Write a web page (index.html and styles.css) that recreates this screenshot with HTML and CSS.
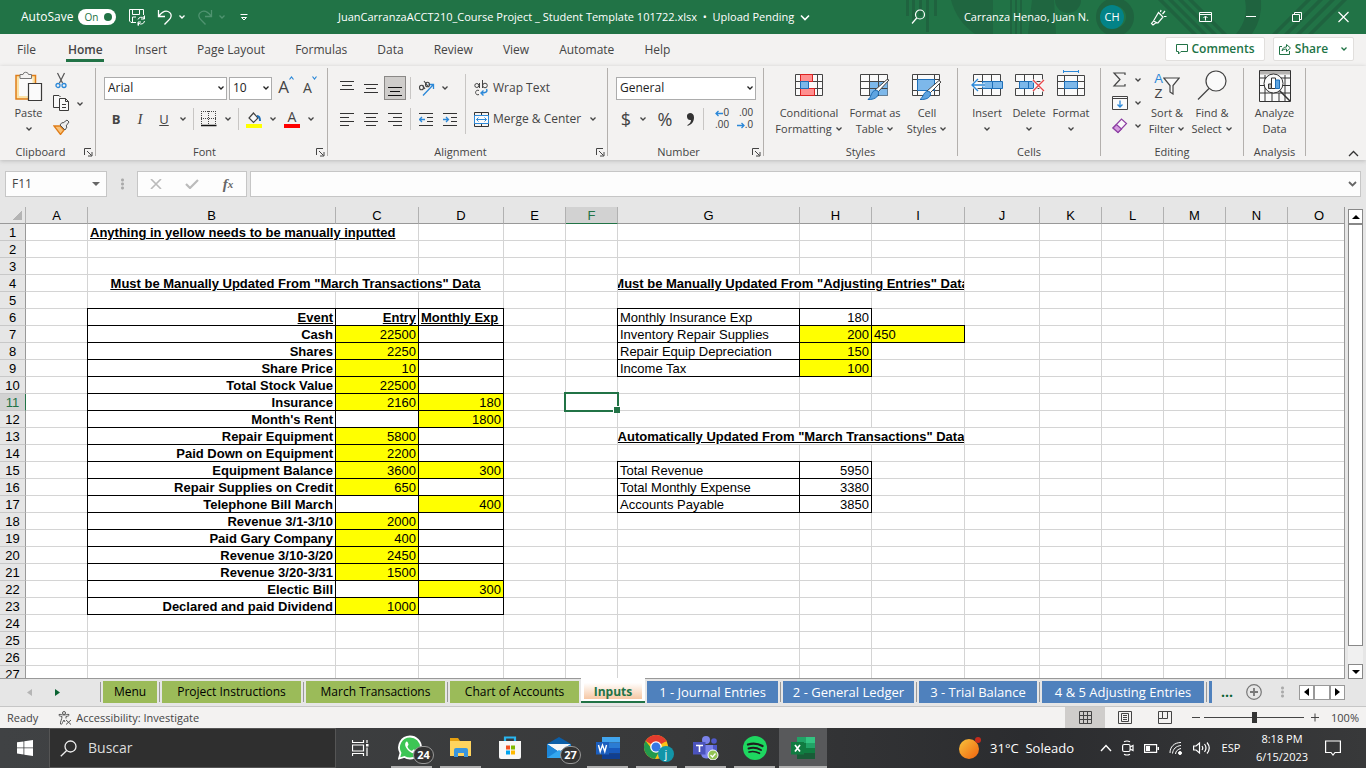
FILE: index.html
```html
<!DOCTYPE html>
<html lang="en">
<head>
<meta charset="utf-8">
<title>JuanCarranzaACCT210_Course Project _ Student Template 101722.xlsx</title>
<link rel="stylesheet" href="styles.css">
</head>
<body>
<svg class="defs" aria-hidden="true">
  <symbol id="chev" viewBox="0 0 8 6"><path d="M1.500 1.500 4 4l2.500-2.500" fill="none" stroke="currentColor" stroke-width="1.300"/></symbol>
  <symbol id="launch" viewBox="0 0 9 9"><path d="M.5 7V.5H7M3 3l4.500 4.500M8 4v4H4" fill="none" stroke="currentColor"/></symbol>
</svg>

<header class="title">
  <svg class="pattern" viewBox="0 0 460 34" preserveAspectRatio="xMaxYMin slice" aria-hidden="true">
    <g fill="#1f633f">
      <path d="M0 0h3v16H0zM6 0h3v20H6zM13 0h3v16h-3zM20 0h3v32h-3zM28 0h3v16h-3z"/>
      <path d="M45 0a60 60 0 0 0 24 34h18V0zM126 0h22l2 34h-28z" opacity=".8"/>
      <path d="M104 0h2v34h-2zM109 0h2v34h-2zM114 0h2v34h-2z"/>
      <path d="M149 0a13 13 0 0 0 26 0z"/>
      <path d="M330 34a40 40 0 0 0 9-34h16a52 52 0 0 1-9 34z"/>
      <path d="m252 0 34 34h5L257 0zm10 0 34 34h5L267 0zm10 0 34 34h5L277 0zm10 0 34 34h5L287 0zM366 34l34-34h5l-34 34zm12 0 34-34h5l-34 34zm12 0 34-34h5l-34 34zm12 0 34-34h5l-34 34z"/>
    </g>
    <circle cx="209" cy="17" r="15" fill="none" stroke="#1f633f" stroke-width="8"/>
  </svg>
  <label class="autosave">AutoSave <span class="switch"><input type="checkbox" checked><span>On</span></span></label>
  <button class="tbtn save" aria-label="Save"><svg width="18" height="18" viewBox="0 0 18 18" fill="none" stroke="#fff"><path d="M8 14.500H3L1.500 13V1.500h14V7M4.500 1.500v5h7v-5M4.500 14v-5H8M10 11.500a3.500 3.500 0 0 1 6-1V8m.5 5a3.500 3.500 0 0 1-6 2V17.500M16.500 7.500V11H13M10 17.500V14h3"/></svg></button>
  <button class="tbtn undo" aria-label="Undo"><svg width="16" height="17" viewBox="0 0 16 17" fill="none" stroke="#fff" stroke-width="1.300"><path d="M1.500 1v6.500H8M2 7c3-4 6-5.500 9-4.500 3 1 4 4 2.500 6.500-1 2-4 4-6 6.500"/></svg><svg class="ch" ><use href="#chev"/></svg></button>
  <button class="tbtn redo" aria-label="Redo"><svg width="16" height="17" viewBox="0 0 16 17" fill="none" stroke="#4f9370" stroke-width="1.300"><path d="M14.500 1v6.500H8M14 7c-3-4-6-5.500-9-4.500-3 1-4 4-2.500 6.500 1 2 4 4 6 6.500"/></svg><svg class="ch"><use href="#chev"/></svg></button>
  <button class="tbtn qat" aria-label="Customize Quick Access Toolbar"><svg width="8" height="7" viewBox="0 0 8 7"><path d="M.5.500h7" stroke="#fff"/><path d="M1.500 3.500 4 6l2.500-2.500z" stroke="#fff" fill="none"/></svg></button>
  <button class="docname">JuanCarranzaACCT210_Course Project _ Student Template 101722.xlsx&nbsp; • &nbsp;Upload Pending <svg width="10" height="7" viewBox="0 0 10 7"><path d="m1 1.500 4 4 4-4" fill="none" stroke="#fff" stroke-width="1.600"/></svg></button>
  <div class="tright">
    <button class="tbtn find" aria-label="Search"><svg width="15" height="16" viewBox="0 0 15 16" fill="none" stroke="#fff" stroke-width="1.200"><circle cx="9" cy="5.500" r="4.500"/><path d="M5.700 9 1 14.500"/></svg></button>
    <button class="user">Carranza Henao, Juan N. <span class="avatar">CH</span></button>
    <button class="tbtn pen" aria-label="Coming soon"><svg width="17" height="17" viewBox="0 0 17 17" fill="none" stroke="#fff" stroke-width="1.200"><path d="m8.500 3.500 4.500 4.500-5 6H5.500L3 16l-1.500-1.500L3.500 12zM3.500 12l4 2M10.500 3l.5-2M12.500 5 15 2M14 7.500h2.500"/></svg></button>
    <button class="win" aria-label="Ribbon Display Options"><svg width="13" height="12" viewBox="0 0 13 12" fill="none" stroke="#fff"><path d="M.5 1.500h12v9H.5zM.5 3.500h12M6.500 9.500v-4M4.500 7l2-2 2 2"/></svg></button>
    <button class="win" aria-label="Minimize"><svg width="10" height="12" viewBox="0 0 10 12"><path d="M0 5.500h10" stroke="#fff"/></svg></button>
    <button class="win" aria-label="Restore"><svg width="11" height="12" viewBox="0 0 11 12" fill="none" stroke="#fff"><path d="M.5 3.500h7v7h-7zM2.500 3.500v-2h7v7h-2"/></svg></button>
    <button class="win" aria-label="Close"><svg width="11" height="12" viewBox="0 0 11 12" fill="none" stroke="#fff" stroke-width="1.200"><path d="m.5 1 10 10M10.500 1l-10 10"/></svg></button>
  </div>
</header>

<nav class="menu">
  <button>File</button><button class="on">Home</button><button>Insert</button><button>Page Layout</button><button>Formulas</button><button>Data</button><button>Review</button><button>View</button><button>Automate</button><button>Help</button>
  <div class="collab">
    <button class="cbtn"><svg width="12" height="12" viewBox="0 0 12 12" fill="none" stroke="#217346"><path d="M.5 1.500h11v7H5L2.500 11V8.500h-2z"/></svg>Comments</button>
    <button class="cbtn share"><svg width="12" height="12" viewBox="0 0 12 12" fill="none" stroke="#217346"><path d="M3 3.500H.5v8h10V8M3 8c.5-3 2-4 4.500-4V1.500l4 3.500-4 3.500V6C5.500 6 4 6.500 3 8z"/></svg>Share<svg class="ch"><use href="#chev"/></svg></button>
  </div>
</nav>

<section class="ribbon">
  <div class="grp g-clip">
    <div class="body">
      <button class="big"><svg width="28" height="30" viewBox="0 0 28 30"><path d="M1 4.500h19.500V28H1z" fill="#fbe3a8" stroke="#e07d18" stroke-width="1.500"/><path d="M4 7h13.500v18H4z" fill="#fafafa"/><path d="M5 7.500v-4h3a2.800 2.800 0 0 1 5.500 0h3v4z" fill="#f3f2f1" stroke="#777"/><path d="M13.500 12.500h13v17h-13z" fill="#fafafa" stroke="#3b3a39" stroke-width="1.200"/></svg><span>Paste</span><svg class="ch"><use href="#chev"/></svg></button>
      <div class="stack">
        <button aria-label="Cut"><svg width="12" height="17" viewBox="0 0 12 17" fill="none"><path d="m2.500 1 5 10M9.500 1l-5 10" stroke="#555" stroke-width="1.200"/><circle cx="3" cy="13.500" r="2" stroke="#2b88d8" stroke-width="1.300"/><circle cx="9" cy="13.500" r="2" stroke="#2b88d8" stroke-width="1.300"/></svg></button>
        <button aria-label="Copy"><svg width="17" height="17" viewBox="0 0 17 17" fill="#f9f9f9" stroke="#3b3a39"><path d="M6 12.500H.5V.5H6L7.500 2M6.500 15.500V3.500h6l3 3v9zM12.500 3.500v3h3M9 9.500h4M9 12.500h4"/></svg><svg class="ch"><use href="#chev"/></svg></button>
        <button aria-label="Format Painter"><svg width="17" height="16" viewBox="0 0 17 16"><path d="M1 7h6l4 4-3.500 4.500z" fill="#f8c27a" stroke="#e07d18" stroke-width="1.300"/><path d="m7 6 5 5 2-3-1-1 3-4-2-2-4 3-1-.5z" fill="#eee" stroke="#555"/></svg></button>
      </div>
    </div>
    <div class="foot"><span>Clipboard</span><button aria-label="Clipboard options"><svg width="9" height="9"><use href="#launch"/></svg></button></div>
  </div>
  <div class="grp g-font">
    <div class="body rows">
      <div class="row">
        <label class="combo fname"><select aria-label="Font"><option>Arial</option></select><svg class="ch"><use href="#chev"/></svg></label>
        <label class="combo fsize"><select aria-label="Font size"><option>10</option></select><svg class="ch"><use href="#chev"/></svg></label>
        <button class="ic aa" aria-label="Increase Font Size"><span class="a1">A</span><svg width="5" height="4" viewBox="0 0 5 4"><path d="m.5 3.500 2-2.500 2 2.500" fill="none" stroke="#2b88d8" stroke-width="1.200"/></svg></button>
        <button class="ic aa" aria-label="Decrease Font Size"><span class="a2">A</span><svg width="5" height="4" viewBox="0 0 5 4"><path d="m.5.500 2 2.500 2-2.500" fill="none" stroke="#2b88d8" stroke-width="1.200"/></svg></button>
      </div>
      <div class="row r2">
        <button class="ic"><b>B</b></button><button class="ic"><i>I</i></button><button class="ic"><u>U</u></button><button class="dd" aria-label="Underline options"><svg class="ch"><use href="#chev"/></svg></button>
        <i class="sep"></i>
        <button class="ic" aria-label="Borders"><svg width="16" height="16" viewBox="0 0 16 16" fill="none" stroke="#444"><path d="M.5 0v14M7.500 0v14M14.500 0v14M0 .5h15M0 7.500h15" stroke-dasharray="1 1"/><path d="M0 14.500h15.500" stroke="#111" stroke-width="1.500"/></svg></button><button class="dd" aria-label="Border options"><svg class="ch"><use href="#chev"/></svg></button>
        <i class="sep"></i>
        <button class="ic" aria-label="Fill Color"><svg width="17" height="17" viewBox="0 0 17 17"><path d="M7.500 2 3 7l4.500 4.500L12 7 7 1.500" fill="#fafafa" stroke="#444" stroke-width="1.200"/><path d="M11 5c2 0 3 1 3 5" fill="none" stroke="#1e6fb8" stroke-width="2"/><path d="M0 13h16v4H0z" fill="#ff0"/></svg></button><button class="dd" aria-label="Fill options"><svg class="ch"><use href="#chev"/></svg></button>
        <button class="ic fc" aria-label="Font Color"><span>A</span></button><button class="dd" aria-label="Font color options"><svg class="ch"><use href="#chev"/></svg></button>
      </div>
    </div>
    <div class="foot"><span>Font</span><button aria-label="Font options"><svg width="9" height="9"><use href="#launch"/></svg></button></div>
  </div>
  <div class="grp g-align">
    <div class="body">
      <div class="rows">
        <div class="row">
          <button class="ic" aria-label="Top Align"><svg width="14" height="16" viewBox="0 0 14 16" stroke="#333"><path d="M0 1.500h14M2 5.500h10M0 9.500h14"/></svg></button>
          <button class="ic" aria-label="Middle Align"><svg width="14" height="16" viewBox="0 0 14 16" stroke="#333"><path d="M0 4.500h14M2 8.500h10M0 12.500h14"/></svg></button>
          <button class="ic on" aria-label="Bottom Align"><svg width="14" height="16" viewBox="0 0 14 16" stroke="#111"><path d="M0 7.500h14M2 11.500h10M0 15.500h14"/></svg></button>
          <i class="sep"></i>
          <button class="ic" aria-label="Orientation"><svg width="17" height="17" viewBox="0 0 17 17" fill="none"><path d="M5 15.500 15 5M10.500 4.500H15.500V9" stroke="#2b88d8" stroke-width="1.300"/><g stroke="#444" stroke-width="1.100"><ellipse cx="3.500" cy="7.500" rx="2" ry="2.300"/><path d="m4.500 5 2.500 4M6 1l4.500 6"/><ellipse cx="9.500" cy="4.500" rx="2" ry="2.300"/></g></svg></button><button class="dd" aria-label="Orientation options"><svg class="ch"><use href="#chev"/></svg></button>
        </div>
        <div class="row r2">
          <button class="ic" aria-label="Align Left"><svg width="14" height="14" viewBox="0 0 14 14" stroke="#333"><path d="M0 1.500h14M0 5.500h9M0 9.500h14M0 13.500h9"/></svg></button>
          <button class="ic" aria-label="Center"><svg width="14" height="14" viewBox="0 0 14 14" stroke="#333"><path d="M0 1.500h14M2 5.500h10M0 9.500h14M2 13.500h10"/></svg></button>
          <button class="ic" aria-label="Align Right"><svg width="14" height="14" viewBox="0 0 14 14" stroke="#333"><path d="M0 1.500h14M5 5.500h9M0 9.500h14M5 13.500h9"/></svg></button>
          <i class="sep"></i>
          <button class="ic" aria-label="Decrease Indent"><svg width="14" height="14" viewBox="0 0 14 14" stroke="#333" fill="none"><path d="M0 1.500h14M8 5.500h6M8 9.500h6M0 13.500h14"/><path d="M6 7.500H.5M3 5 .5 7.500 3 10" stroke="#2b88d8" stroke-width="1.300"/></svg></button>
          <button class="ic" aria-label="Increase Indent"><svg width="14" height="14" viewBox="0 0 14 14" stroke="#333" fill="none"><path d="M0 1.500h14M8 5.500h6M8 9.500h6M0 13.500h14"/><path d="M0 7.500h5.500M3 5l2.500 2.500L3 10" stroke="#2b88d8" stroke-width="1.300"/></svg></button>
        </div>
      </div>
      <i class="sep tall"></i>
      <div class="rows">
        <div class="row"><button class="txt"><svg width="15" height="17" viewBox="0 0 15 17" fill="none" stroke="#444"><circle cx="2.800" cy="5.500" r="2"/><path d="M5.500 3v5M8.500 0v8"/><circle cx="11" cy="5.500" r="2.300"/><path d="M5 10.500a2.300 2.300 0 1 0 0 4"/><path d="M12.500 9c1.500 3-1 4-5.500 4M9.500 10.500 7 13l2.500 2.500" stroke="#2b88d8" stroke-width="1.400"/></svg>Wrap Text</button></div>
        <div class="row r2"><button class="txt"><svg width="15" height="15" viewBox="0 0 15 15" fill="none" stroke="#333"><path d="M.5.500h14v14H.5zM7.500 0v4M7.500 11v4"/><path d="M.5 3.500h14v8H.5z" fill="#fafafa" stroke="#2b88d8"/><path d="M2.500 7.500h10M4.500 5.500l-2 2 2 2M10.500 5.500l2 2-2 2" stroke="#2b88d8"/></svg>Merge &amp; Center<svg class="ch"><use href="#chev"/></svg></button></div>
      </div>
    </div>
    <div class="foot"><span>Alignment</span><button aria-label="Alignment options"><svg width="9" height="9"><use href="#launch"/></svg></button></div>
  </div>
  <div class="grp g-num">
    <div class="body rows">
      <div class="row"><label class="combo fnum"><select aria-label="Number format"><option>General</option></select><svg class="ch"><use href="#chev"/></svg></label></div>
      <div class="row r2">
        <button class="ic sym">$</button><button class="dd" aria-label="Accounting options"><svg class="ch"><use href="#chev"/></svg></button><button class="ic sym pct">%</button><button class="ic comma" aria-label="Comma Style"><svg width="9" height="13" viewBox="0 0 9 13"><path d="M4 0a3.500 3.500 0 1 0 1 7c0 2-1.500 4-3.500 5v1C6 11.500 8 8.500 8 4.500 8 1.500 6.500 0 4 0z" fill="#333"/></svg></button>
        <i class="sep"></i>
        <button class="ic dec" aria-label="Increase Decimal"><span><svg width="8" height="7" viewBox="0 0 8 7"><path d="M8 3.500H1M3.500 1 1 3.500 3.500 6" fill="none" stroke="#2b88d8" stroke-width="1.300"/></svg>0</span><span>.00</span></button>
        <button class="ic dec" aria-label="Decrease Decimal"><span>.00</span><span><svg width="8" height="7" viewBox="0 0 8 7"><path d="M0 3.500h7M4.500 1 7 3.500 4.500 6" fill="none" stroke="#2b88d8" stroke-width="1.300"/></svg>.0</span></button>
      </div>
    </div>
    <div class="foot"><span>Number</span><button aria-label="Number options"><svg width="9" height="9"><use href="#launch"/></svg></button></div>
  </div>
  <div class="grp g-styles">
    <div class="body">
      <button class="big b-cf"><svg width="28" height="30" viewBox="0 0 28 30" fill="#fafafa" stroke="#444"><path d="M.5 4.500h27v21H.5zM.5 11.500h27M.5 18.500h27M5.500 4v22M22.500 4v22"/><path d="M5.500 4.500h12v7h-12zM5.500 18.500h14v7h-14z" fill="#ff8f8f" stroke="#d22"/><path d="M5.500 11.500h8v7h-8z" fill="#7db8ea" stroke="#1e6fb8"/></svg><span>Conditional<br>Formatting <svg class="ch"><use href="#chev"/></svg></span></button>
      <button class="big b-ft"><svg width="30" height="30" viewBox="0 0 30 30" fill="#fafafa" stroke="#444"><path d="M.5 4.500h27v21H.5z"/><path d="M9.500 11.500h18v14h-18z" fill="#7db8ea" stroke="none"/><path d="M.5 11.500h27M.5 18.500h27M9.500 4v22M18.500 4v22" fill="none"/><path d="m29 10-11 12-3-2L27 9.500z" fill="#fff"/><path d="M18 21c2 4-2 9-10 8.500 3-2 3-6 5-8 2-1.500 3-1.500 5-.5z" fill="#5fa4e0" stroke="#1e6fb8"/></svg><span>Format as<br>Table <svg class="ch"><use href="#chev"/></svg></span></button>
      <button class="big b-cs"><svg width="30" height="30" viewBox="0 0 30 30" fill="#fafafa" stroke="#444"><path d="M.5 4.500h27v21H.5zM5.500 4v22M22.500 4v22M0 9.500h28M0 20.500h28"/><path d="M5.500 9.500h17v11h-17z" fill="#7db8ea" stroke="#1e6fb8"/><path d="m29 12-11 11-3-2L27 10.500z" fill="#fff"/><path d="M18 22c2 4-2 8-10 7.500 3-2 3-5 5-7 2-1.500 3-1.500 5-.5z" fill="#5fa4e0" stroke="#1e6fb8"/></svg><span>Cell<br>Styles <svg class="ch"><use href="#chev"/></svg></span></button>
    </div>
    <div class="foot"><span>Styles</span></div>
  </div>
  <div class="grp g-cells">
    <div class="body">
      <button class="big"><svg width="32" height="30" viewBox="0 0 32 30" fill="#fafafa" stroke="#444"><path d="M2.500 4.500h27v21h-27zM2.500 11.500h27M2.500 18.500h27M11.500 4v22M20.500 4v22"/><path d="M11.500 11.500h20v7h-20zM21.500 11.500v7" fill="#7db8ea" stroke="#1e6fb8"/><path d="M14 15H1.500M7 9l-6 6 6 6" fill="none" stroke="#fafafa" stroke-width="3"/><path d="M14 15H1.500M7 9l-6 6 6 6" fill="none" stroke="#2b88d8" stroke-width="1.400"/></svg><span>Insert</span><svg class="ch"><use href="#chev"/></svg></button>
      <button class="big"><svg width="32" height="30" viewBox="0 0 32 30" fill="#fafafa" stroke="#444"><path d="M2.500 4.500h27v7h-27zM2.500 18.500h27v7h-27zM11.500 4v7M20.500 4v7M11.500 18v8M20.500 18v8"/><path d="M6.500 11.500h14v7h-14zM15.500 11.500v7" fill="#7db8ea" stroke="#1e6fb8"/><path d="m20 10 11 11M31 10 20 21" stroke="#fafafa" stroke-width="3"/><path d="m20 10 11 11M31 10 20 21" stroke="#e8474b" stroke-width="1.400"/></svg><span>Delete</span><svg class="ch"><use href="#chev"/></svg></button>
      <button class="big"><svg width="28" height="30" viewBox="0 0 28 30" fill="#fafafa" stroke="#444"><path d="M.5 5.500h27v20H.5zM.5 11.500h27M.5 18.500h27M7.500 5v21M20.500 5v21"/><path d="M7.500 11.500h13v7h-13z" fill="#7db8ea" stroke="#1e6fb8"/><path d="M6.500 0v3M21.500 0v3M6.500 1.500h15" stroke="#2b88d8"/></svg><span>Format</span><svg class="ch"><use href="#chev"/></svg></button>
    </div>
    <div class="foot"><span>Cells</span></div>
  </div>
  <div class="grp g-edit">
    <div class="body">
      <div class="stack">
        <button aria-label="AutoSum"><svg width="16" height="16" viewBox="0 0 16 16" fill="none" stroke="#444" stroke-width="1.200"><path d="M13 3V1H2l6 6.500L2 14h11v-2"/></svg><svg class="ch"><use href="#chev"/></svg></button>
        <button aria-label="Fill"><svg width="16" height="14" viewBox="0 0 16 14" fill="#fafafa" stroke="#444"><path d="M.5.500h15v13H.5zM.5 2.500h15"/><path d="M8 4.500V11M5.500 8.500 8 11l2.500-2.500" fill="none" stroke="#2b88d8" stroke-width="1.300"/></svg><svg class="ch"><use href="#chev"/></svg></button>
        <button aria-label="Clear"><svg width="16" height="16" viewBox="0 0 16 16" stroke="#8d3fa3" stroke-width="1.200"><path d="m1 10 8.500-9 5 4.500L6 14.500z" fill="#fafafa"/><path d="m1 10 3.500-3.500 5 4.500L6 14.500z" fill="#d59be0"/></svg><svg class="ch"><use href="#chev"/></svg></button>
      </div>
      <button class="big b-sf"><span class="az"><span><b>A</b><b>Z</b></span><svg width="17" height="18" viewBox="0 0 17 18"><path d="M.8 1h15.400L10 8.500V17l-3-2V8.500z" fill="#fafafa" stroke="#444" stroke-width="1.200"/></svg></span><span>Sort &amp;<br>Filter <svg class="ch"><use href="#chev"/></svg></span></button>
      <button class="big b-fs"><svg width="30" height="30" viewBox="0 0 30 30" fill="#fafafa" stroke="#444" stroke-width="1.200"><circle cx="19" cy="11" r="10"/><path d="M12 18.500 1 29.500"/></svg><span>Find &amp;<br>Select <svg class="ch"><use href="#chev"/></svg></span></button>
    </div>
    <div class="foot"><span>Editing</span></div>
  </div>
  <div class="grp g-an">
    <div class="body">
      <button class="big"><svg width="32" height="32" viewBox="0 0 32 32" fill="#fafafa" stroke="#333"><path d="M.5.500h31v31H.5zM.5 8h31M.5 15.500h31M.5 23h31M6 5v26M13 23v8M20 23v8M26 5v26"/><path d="M1 1h30v3.500H1z" fill="#b5b3b1" stroke="none"/><path d="m20 20 11 11" stroke-width="1.500"/><circle cx="14.500" cy="13.500" r="9.500"/><path d="M9.500 14h3v4.500h-3z" fill="#bbb"/><path d="M12.500 8h4v10.500h-4z" fill="#fff"/><path d="M16.500 10h4v8.500h-4z" fill="#5fa4e0" stroke="#1e6fb8"/></svg><span>Analyze<br>Data</span></button>
    </div>
    <div class="foot"><span>Analysis</span></div>
  </div>
  <button class="collapse" aria-label="Collapse the Ribbon"><svg width="11" height="7" viewBox="0 0 11 7"><path d="m1 6 4.500-4.500L10 6" fill="none" stroke="#333" stroke-width="1.300"/></svg></button>
</section>

<section class="fbar">
  <div class="namebox"><input value="F11" aria-label="Name Box"><svg width="8" height="4" viewBox="0 0 8 4"><path d="M0 0h8L4 4z" fill="#666"/></svg></div>
  <i class="dots"></i>
  <div class="fx">
    <button aria-label="Cancel"><svg width="12" height="10" viewBox="0 0 12 10"><path d="m1 0 10 10M11 0 1 10" stroke="#bbb" stroke-width="1.600"/></svg></button>
    <button aria-label="Enter"><svg width="14" height="10" viewBox="0 0 14 10"><path d="m1 5 4 4 8-8" fill="none" stroke="#bbb" stroke-width="2.200"/></svg></button>
    <button aria-label="Insert Function" class="fn">f<sub>x</sub></button>
  </div>
  <div class="formula"><input aria-label="Formula Bar"><svg width="9" height="6" viewBox="0 0 9 6"><path d="m1 1 3.500 3.500L8 1" fill="none" stroke="#666" stroke-width="1.800"/></svg></div>
</section>

<main class="sheet">
<div class="gridwrap">
<table class="grid">
<colgroup><col class="ch0"><col class="cA"><col class="cB"><col class="cC"><col class="cD"><col class="cA"><col class="cF"><col class="cG"><col class="cH"><col class="cI"><col class="cJ"><col class="cA"><col class="cA"><col class="cA"><col class="cA"><col></colgroup>
<thead><tr><th class="corner"><th>A<th>B<th>C<th>D<th>E<th class="sel">F<th>G<th>H<th>I<th>J<th>K<th>L<th>M<th>N<th>O</thead>
<tbody>
<tr><th>1<td><td colspan="2" class="u l">Anything in yellow needs to be manually inputted<td><td><td><td><td><td><td><td><td><td><td><td>
<tr><th>2<td><td><td><td><td><td><td><td><td><td><td><td><td><td><td>
<tr><th>3<td><td><td><td><td><td><td><td><td><td><td><td><td><td><td>
<tr><th>4<td><td colspan="3" class="u m"><div>Must be Manually Updated From "March Transactions" Data</div><td><td><td colspan="3" class="u m"><div>Must be Manually Updated From "Adjusting Entries" Data</div><td><td><td><td><td><td>
<tr><th>5<td><td><td><td><td><td><td><td><td><td><td><td><td><td><td>
<tr><th>6<td><td class="x u">Event<td class="x u">Entry<td class="x u l">Monthly Exp<td><td><td class="x l">Monthly Insurance Exp<td class="x">180<td><td><td><td><td><td><td>
<tr><th>7<td><td class="x b">Cash<td class="x y">22500<td class="x"><td><td><td class="x l">Inventory Repair Supplies<td class="x y">200<td class="x y l">450<td><td><td><td><td><td>
<tr><th>8<td><td class="x b">Shares<td class="x y">2250<td class="x"><td><td><td class="x l">Repair Equip Depreciation<td class="x y">150<td><td><td><td><td><td><td>
<tr><th>9<td><td class="x b">Share Price<td class="x y">10<td class="x"><td><td><td class="x l">Income Tax<td class="x y">100<td><td><td><td><td><td><td>
<tr><th>10<td><td class="x b">Total Stock Value<td class="x y">22500<td class="x"><td><td><td><td><td><td><td><td><td><td><td>
<tr><th class="sel">11<td><td class="x b">Insurance<td class="x y">2160<td class="x y">180<td><td class="active"><td><td><td><td><td><td><td><td><td>
<tr><th>12<td><td class="x b">Month's Rent<td class="x"><td class="x y">1800<td><td><td><td><td><td><td><td><td><td><td>
<tr><th>13<td><td class="x b">Repair Equipment<td class="x y">5800<td class="x"><td><td><td colspan="3" class="u m"><div>Automatically Updated From "March Transactions" Data</div><td><td><td><td><td><td>
<tr><th>14<td><td class="x b">Paid Down on Equipment<td class="x y">2200<td class="x"><td><td><td><td><td><td><td><td><td><td><td>
<tr><th>15<td><td class="x b">Equipment Balance<td class="x y">3600<td class="x y">300<td><td><td class="x l">Total Revenue<td class="x">5950<td><td><td><td><td><td><td>
<tr><th>16<td><td class="x b">Repair Supplies on Credit<td class="x y">650<td class="x"><td><td><td class="x l">Total Monthly Expense<td class="x">3380<td><td><td><td><td><td><td>
<tr><th>17<td><td class="x b">Telephone Bill March<td class="x"><td class="x y">400<td><td><td class="x l">Accounts Payable<td class="x">3850<td><td><td><td><td><td><td>
<tr><th>18<td><td class="x b">Revenue 3/1-3/10<td class="x y">2000<td class="x"><td><td><td><td><td><td><td><td><td><td><td>
<tr><th>19<td><td class="x b">Paid Gary Company<td class="x y">400<td class="x"><td><td><td><td><td><td><td><td><td><td><td>
<tr><th>20<td><td class="x b">Revenue 3/10-3/20<td class="x y">2450<td class="x"><td><td><td><td><td><td><td><td><td><td><td>
<tr><th>21<td><td class="x b">Revenue 3/20-3/31<td class="x y">1500<td class="x"><td><td><td><td><td><td><td><td><td><td><td>
<tr><th>22<td><td class="x b">Electic Bill<td class="x"><td class="x y">300<td><td><td><td><td><td><td><td><td><td><td>
<tr><th>23<td><td class="x b">Declared and paid Dividend<td class="x y">1000<td class="x"><td><td><td><td><td><td><td><td><td><td><td>
<tr><th>24<td><td><td><td><td><td><td><td><td><td><td><td><td><td><td>
<tr><th>25<td><td><td><td><td><td><td><td><td><td><td><td><td><td><td>
<tr><th>26<td><td><td><td><td><td><td><td><td><td><td><td><td><td><td>
<tr><th>27<td><td><td><td><td><td><td><td><td><td><td><td><td><td><td>
</tbody>
</table>
</div>
<div class="vscroll">
  <button aria-label="Scroll up"><svg width="8" height="4" viewBox="0 0 8 4"><path d="M0 4h8L4 0z"/></svg></button>
  <div class="thumb"></div>
  <button aria-label="Scroll down"><svg width="8" height="4" viewBox="0 0 8 4"><path d="M0 0h8L4 4z"/></svg></button>
</div>
</main>

<nav class="tabs">
  <div class="tabnav"><button aria-label="Previous sheets"><svg width="5" height="7" viewBox="0 0 5 7"><path d="M5 0v7L0 3.500z" fill="#b5b5b5"/></svg></button><button aria-label="Next sheets"><svg width="5" height="7" viewBox="0 0 5 7"><path d="M0 0v7l5-3.500z" fill="#0a6332"/></svg></button></div>
  <button class="tab g w1">Menu</button><button class="tab g w4">Project Instructions</button><button class="tab g w4">March Transactions</button><button class="tab g w3 last">Chart of Accounts</button><button class="tab cur">Inputs</button><button class="tab bl w3 first">1 - Journal Entries</button><button class="tab bl w3">2 - General Ledger</button><button class="tab bl w2">3 - Trial Balance</button><button class="tab bl w5">4 &amp; 5 Adjusting Entries</button><button class="tab bl cut" aria-label="Next sheet"></button>
  <button class="more">...</button>
  <div class="tabsright">
    <button aria-label="New sheet"><svg width="16" height="16" viewBox="0 0 16 16" fill="none" stroke="#777"><circle cx="8" cy="8" r="7.300" stroke-width="1.200"/><path d="M8 4v8M4 8h8" stroke-width="1.800"/></svg></button>
    <i class="dots"></i>
    <div class="hscroll"><button aria-label="Scroll left"><svg width="5" height="8" viewBox="0 0 5 8"><path d="M5 0v8L0 4z"/></svg></button><div></div><button aria-label="Scroll right"><svg width="5" height="8" viewBox="0 0 5 8"><path d="M0 0v8l5-4z"/></svg></button></div>
  </div>
</nav>

<footer class="status">
  <span class="ready">Ready</span>
  <button class="acc"><svg width="14" height="14" viewBox="0 0 14 14" fill="none" stroke="#555"><circle cx="6" cy="2" r="1.500"/><path d="M1 3.500C.5 5 2 5 4 5.500c0 3-2 5-1.500 7.500.8 1 1.500 0 2-1.500L6 9l1 2M11 3.500c.5 1.500-1 1.500-3 2v2M8 9l5 4.500M13 9l-5 4.500M1 3.500C2.500 3 4 4 6 4s3.500-1 5-.5"/></svg>Accessibility: Investigate</button>
  <div class="views">
    <button class="on" aria-label="Normal"><svg width="13" height="13" viewBox="0 0 13 13" fill="none" stroke="#444"><path d="M.5.500h12v12H.5zM.5 4.500h12M.5 8.500h12M4.500.500v12M8.500.500v12"/></svg></button>
    <button aria-label="Page Layout"><svg width="14" height="13" viewBox="0 0 14 13" fill="none" stroke="#444"><path d="M.5.500h13v12H.5zM3.500 2.500h7v8h-7zM5 4.500h4M5 6.500h4M5 8.500h4"/></svg></button>
    <button aria-label="Page Break Preview"><svg width="14" height="13" viewBox="0 0 14 13" fill="none" stroke="#444"><path d="M.5.500h13v12H.5zM4.500.500v7h5v-7M.5 7.500h4"/></svg></button>
    <button class="z" aria-label="Zoom out"><svg width="9" height="9" viewBox="0 0 9 9"><path d="M0 4.500h8" stroke="#444"/></svg></button>
    <input type="range" min="10" max="190" value="100" aria-label="Zoom">
    <button class="z" aria-label="Zoom in"><svg width="9" height="9" viewBox="0 0 9 9"><path d="M0 4.500h8M4 .5v8" stroke="#444"/></svg></button>
    <span class="pc">100%</span>
  </div>
</footer>

<div class="taskbar">
  <button class="start" aria-label="Start"><svg width="16" height="16" viewBox="0 0 16 16" fill="#fff"><path d="m0 2.300 6.500-.9v6.100H0zM7.300 1.300 16 0v7.500H7.300zM0 8.300h6.500v6.100L0 13.500zM7.300 8.300H16V16l-8.700-1.300z"/></svg></button>
  <label class="search"><svg width="17" height="17" viewBox="0 0 17 17" fill="none" stroke="#eee" stroke-width="1.300"><circle cx="10.500" cy="6.500" r="5.500"/><path d="M6.700 10.500.8 16.300"/></svg><input placeholder="Buscar" aria-label="Buscar"></label>
  <button class="tv" aria-label="Task View"><svg width="17" height="16" viewBox="0 0 17 16" fill="none" stroke="#fff" stroke-width="1.200"><path d="M.5 0v2.500h11V0M.5 5h11v6H.5zM.5 16v-2.500h11V16M15 0v3M15 7.500V16"/><path d="M14 4h2.500v2.500H14z" fill="#fff" stroke="none"/></svg></button>
  <button class="app run" aria-label="WhatsApp"><svg width="28" height="26" viewBox="0 0 28 26"><path d="M12 1.500A11 11 0 0 1 12 23.500c-2 0-4-.5-5.500-1.500L1 23.500 2.500 18A11 11 0 0 1 12 1.500z" fill="#3cc554" stroke="#fff" stroke-width="1.800"/><path d="M8.500 6.500c-3 2.500-.5 7 2.500 9.500s6.500 3.500 7.500.5c.3-1-2.500-2.500-3.200-2-.8.800-1.300 1.500-2 1.200C11.500 15 9.800 13 9.500 11.500c0-.8 1.300-1.500 1-2.300-.3-1-1-3-2-2.700z" fill="#fff"/></svg><span class="badge">24</span></button>
  <button class="app run" aria-label="File Explorer"><svg width="24" height="20" viewBox="0 0 24 20"><path d="M1 0h8l2 3H1z" fill="#e6a010"/><path d="M1 3h21v15H1z" fill="#ffd45e"/><path d="M5 19v-7q0-2 2-2h10q2 0 2 2v7h-4v-4H9v4z" fill="#3a96dd"/></svg></button>
  <button class="app" aria-label="Microsoft Store"><svg width="24" height="24" viewBox="0 0 24 24"><path d="M7 5V1.500h10V5" fill="none" stroke="#29b6f0" stroke-width="2.200"/><path d="M1 5h22v16q0 2-2 2H3q-2 0-2-2z" fill="#f7f7f7"/><path d="M8 9.500h4v4H8z" fill="#f25022"/><path d="M13 9.500h4v4h-4z" fill="#7fba00"/><path d="M8 14.500h4v4H8z" fill="#00a4ef"/><path d="M13 14.500h4v4h-4z" fill="#ffb900"/></svg></button>
  <button class="app" aria-label="Mail"><svg width="26" height="22" viewBox="0 0 26 22"><path d="M1 7 13 0l12 7v14H1z" fill="#0b5ea8"/><path d="M1 7h24L13 15z" fill="#f4f6f8"/><path d="m1 7 12 8 12-8v14H1z" fill="#1c86d8"/><path d="m1 21 12-8 12 8z" fill="#33a7ef"/></svg><span class="badge">27</span></button>
  <button class="app run" aria-label="Word"><svg width="24" height="22" viewBox="0 0 24 22"><path d="M6 0h18v5.500H6z" fill="#41a5ee"/><path d="M6 5.500h18V11H6z" fill="#2b7cd3"/><path d="M6 11h18v5.500H6z" fill="#185abd"/><path d="M6 16.500h18V22H6z" fill="#103f91"/><path d="M0 5h13v12.500H0z" fill="#1b5ebe"/><path d="m2.500 8 1.700 6.500L6.500 8l2.300 6.500L10.500 8" fill="none" stroke="#fff" stroke-width="1.400"/></svg></button>
  <button class="app run" aria-label="Chrome"><svg width="26" height="26" viewBox="0 0 26 26"><circle cx="12" cy="12" r="12" fill="#fbc116"/><path d="M12 12 1.600 6A12 12 0 0 1 22.400 6z" fill="#e33b2e"/><path d="M1.600 6A12 12 0 0 0 11 24l5-9-8-1z" fill="#229a4d"/><path d="M12 6h10.400" stroke="#e33b2e"/><circle cx="12" cy="12" r="5.800" fill="#fff"/><circle cx="12" cy="12" r="4.500" fill="#3577e5"/></svg><span class="badge jb">j</span></button>
  <button class="app run" aria-label="Teams"><svg width="26" height="24" viewBox="0 0 26 24"><circle cx="13" cy="4" r="4" fill="#7b83eb"/><circle cx="21" cy="5" r="2.800" fill="#5059c9"/><path d="M16 9h8v8q-1 4-6 3z" fill="#5059c9"/><path d="M8 9h12v8q-2 6-7 5.500T8 17z" fill="#7b83eb"/><path d="M0 6h12.500v12.500H0z" fill="#4b53bc"/><path d="M3 9.500h7M6.500 9.500V16" stroke="#fff" stroke-width="1.600"/><circle cx="20" cy="19" r="5" fill="#92c353" stroke="#fff"/><path d="m17.500 19 2 2 3-3.500" fill="none" stroke="#fff" stroke-width="1.300"/></svg></button>
  <button class="app run" aria-label="Spotify"><svg width="24" height="24" viewBox="0 0 24 24" fill="none" stroke="#1e1e1e" stroke-linecap="round"><circle cx="12" cy="12" r="12" fill="#1ed760" stroke="none"/><path d="M5 8.500c5-1.500 10-1 14.500 1.500" stroke-width="2.300"/><path d="M5.500 12.500c4-1.200 8.500-.8 12.500 1.500" stroke-width="1.900"/><path d="M6 16c3.500-1 7-.6 10.500 1.300" stroke-width="1.600"/></svg></button>
  <button class="app run act" aria-label="Excel"><svg width="24" height="22" viewBox="0 0 24 22"><path d="M6 0h18v22H6z" fill="#21a366"/><path d="M15 0h9v6h-9z" fill="#33c481"/><path d="M6 6h9v10H6z" fill="#107c41"/><path d="M15 11h9v5h-9z" fill="#107c41"/><path d="M6 16h18v6H6z" fill="#185c37"/><path d="M0 5h13v12.500H0z" fill="#107c41"/><path d="m4 8 5 6.500M9 8l-5 6.500" stroke="#fff" stroke-width="1.700"/></svg></button>
  <div class="tray">
    <button class="weather"><svg width="22" height="22" viewBox="0 0 22 22"><defs><linearGradient id="sun" x1="0" y1="0" x2="1" y2="1"><stop offset="0" stop-color="#f8c33c"/><stop offset="1" stop-color="#f0620e"/></linearGradient></defs><circle cx="10" cy="12" r="10" fill="url(#sun)"/><circle cx="19" cy="3" r="3" fill="#c42b1c"/></svg><span>31°C&nbsp; Soleado</span></button>
    <button aria-label="Hidden icons"><svg width="12" height="8" viewBox="0 0 12 8"><path d="m1 7 5-5.500L11 7" fill="none" stroke="#fff" stroke-width="1.400"/></svg></button>
    <button aria-label="Meet Now"><svg width="12" height="16" viewBox="0 0 12 16" fill="none" stroke="#fff" stroke-width="1.200"><rect x=".6" y="4.500" width="7.500" height="7" rx="1.500"/><path d="m8 7 3-1.500v5L8 9M2 1.800Q5 .2 8 1.800M2 14.200q3 1.600 6 0"/></svg></button>
    <button aria-label="Battery"><svg width="15" height="9" viewBox="0 0 15 9"><path d="M.6.600h12v7.800H.6z" fill="none" stroke="#fff" stroke-width="1.200"/><path d="M2 2h4v5H2zM13.500 3H15v3h-1.500z" fill="#fff"/></svg></button>
    <button aria-label="Network"><svg width="14" height="14" viewBox="0 0 14 14" fill="none" stroke="#fff"><path d="M1 12C1 6 5 1.500 12 1.500M3.500 12.500C4 8 7 5 12 4.500M6.500 13c.2-3 2.500-5 5.500-5.500"/><circle cx="11" cy="12" r="1.500" fill="#fff"/></svg></button>
    <button aria-label="Volume"><svg width="17" height="14" viewBox="0 0 17 14" fill="none" stroke="#fff" stroke-width="1.200"><path d="M.6 5h2.500L6.500 2v10L3.100 9H.6zM9 5q1.500 2 0 4M11.500 3q3 4 0 8M14 1.500q4.500 5.500 0 11"/></svg></button>
    <button class="lang">ESP</button>
    <button class="clock">8:18 PM<br>6/15/2023</button>
    <button class="notif" aria-label="Notifications"><svg width="16" height="17" viewBox="0 0 16 17"><path d="M.6 1h14.800v11.500H10L8 15l-2-2.500H.6z" fill="none" stroke="#fff" stroke-width="1.200"/></svg></button>
  </div>
</div>
</body>
</html>
```
FILE: styles.css
```css
* { box-sizing: border-box; }
html, body { height: 100%; }
body {
  margin: 0;
  display: flex;
  flex-direction: column;
  overflow: hidden;
  background: #e6e6e6;
  color: #444;
  font: 12px/16px "Open Sans", "Noto Sans", sans-serif;
}
button, input, select { font: inherit; color: inherit; }
button {
  display: flex;
  align-items: center;
  justify-content: center;
  padding: 0;
  border: 0;
  background: none;
  white-space: nowrap;
}
svg { flex: none; display: block; }
.defs { position: absolute; width: 0; height: 0; }
.ch { width: 8px; height: 6px; }

/* Title bar */
.title {
  position: relative;
  display: flex;
  align-items: center;
  height: 34px;
  flex: none;
  padding-left: 21px;
  background: #217346;
  color: #fff;
}
.title > * { position: relative; }
.title .pattern { position: absolute; right: 0; top: 0; width: 460px; height: 34px; }
.autosave { display: flex; align-items: center; gap: 5px; width: 95px; }
.switch {
  position: relative;
  display: flex;
  align-items: center;
  width: 38px;
  height: 16px;
  padding: 0 4px 0 6px;
  border-radius: 8px;
  background: #fff;
  color: #217346;
  font-size: 10px;
}
.switch input {
  appearance: none;
  order: 2;
  width: 8px;
  height: 8px;
  margin: 0 0 0 auto;
  border-radius: 50%;
  background: #217346;
}
.save { margin-left: 12px; }
.undo, .redo { gap: 5px; margin-left: 11px; }
.redo { color: #4f9370; }
.qat { margin-left: 14px; }
.docname { gap: 6px; margin-left: 90px; font-size: 11px; }
.tright { display: flex; align-items: center; height: 34px; margin-left: auto; }
.user { gap: 11px; margin-left: 38px; font-size: 11px; }
.avatar {
  width: 24px;
  height: 24px;
  border-radius: 50%;
  background: #038387;
  line-height: 24px;
  font-size: 11px;
}
.pen { margin: 0 15px 0 26px; }
.win { width: 46px; height: 32px; }

/* Ribbon tabs */
.menu { display: flex; flex: none; height: 32px; padding-left: 2px; background: #f3f2f1; }
.menu > button { height: 28px; padding: 4px 15px 0; }
.menu > .on { font-weight: 600; padding: 4px 17px 0; background: linear-gradient(#217346, #217346) center bottom / 38px 3px no-repeat; }
.collab { display: flex; gap: 8px; margin: 3px 12px 0 auto; height: 24px; }
.cbtn {
  gap: 4px;
  width: 100px;
  border: 1px solid #e1dfdd;
  border-radius: 2px;
  background: #fff;
  color: #217346;
  font-weight: 600;
}
.share { width: 81px; }
.share .ch { margin-left: 8px; }

/* Ribbon */
.ribbon {
  display: flex;
  flex: none;
  height: 94px;
  padding-top: 2px;
  background: #f3f2f1;
  box-shadow: 0 1px 4px #bbb;
  position: relative;
}
.grp { display: flex; flex-direction: column; justify-content: space-between; flex: none; height: 90px; background: linear-gradient(#b3b0ad, #b3b0ad) right top / 1px 88px no-repeat; }
.g-clip { width: 96px; }
.g-font { width: 232px; }
.g-align { width: 280px; }
.g-num { width: 156px; }
.g-styles { width: 194px; }
.g-cells { width: 143px; }
.g-edit { width: 143px; }
.g-an { width: 62px; }
.body { display: flex; height: 72px; }
.foot { display: flex; align-items: center; height: 12px; padding-right: 1px; }
.foot span { flex: 1; text-align: center; font-size: 11px; }
.foot button { width: 14px; }
.big { flex-direction: column; justify-content: flex-start; line-height: 16px; font-size: 11px; }
.big > svg:first-child { height: 30px; margin: 2px 0 5px; }
.big > .ch { margin-top: 5px; }
.big > span .ch { display: inline-block; vertical-align: 1px; }
.stack { display: flex; flex-direction: column; }
.stack button { justify-content: flex-start; gap: 6px; height: 23px; }
.g-clip .big { width: 57px; }
.g-clip .big > svg:first-child { margin: 3px 0 4px; }
.g-clip .stack { width: 32px; margin: 1px 0 0 -4px; }
.g-clip .stack button:first-child { padding-left: 2px; }
.rows { flex-direction: column; padding: 8px 0 0 8px; }
.row { display: flex; align-items: center; height: 24px; }
.r2 { margin-top: 7px; }
.ic { width: 24px; height: 24px; }
.dd { width: 14px; height: 24px; }
.sep { width: 1px; height: 22px; margin: 0 3px; background: #c8c6c4; flex: none; }
.combo {
  display: flex;
  align-items: center;
  height: 23px;
  padding: 0 1px 0 3px;
  border: 1px solid #acacac;
  background: #fff;
  color: #222;
}
.combo select { appearance: none; flex: 1; min-width: 0; border: 0; padding: 0; background: none; }
.fname { width: 123px; }
.fsize { width: 43px; margin: 0 2px; }
.fnum { width: 140px; }
.aa { align-items: flex-start; }
.a1 { font-size: 17px; line-height: 22px; }
.a2 { font-size: 14px; line-height: 24px; }
.g-font .r2 b, .g-font .r2 i, .g-font .r2 u { font-size: 13px; }
.g-font .r2 i:not(.sep) { font-family: "Liberation Serif", serif; font-size: 15px; }
.fc span { width: 16px; border-bottom: 4px solid #f00; font-size: 14px; line-height: 14px; }
.g-align .rows:first-child { width: 137px; padding-left: 7px; }
.g-align .ic.on { border: 1px solid #8a8886; background: #cfcdcb; width: 22px; margin: 0 1px; }
.tall { height: 60px; margin: 6px 0 0; }
.txt { gap: 4px; }
.txt .ch { margin-left: 4px; }
.sym { width: 20px; font-size: 18px; }
.pct { width: 30px; }
.comma { width: 20px; }
.dec { flex-direction: column; align-items: flex-end; width: 20px; margin: 0 2px; font: 10px/12px "Liberation Sans", sans-serif; }
.dec span { display: flex; align-items: center; }
.g-styles .body { padding-left: 9px; }
.b-cf { width: 72px; }
.b-ft { width: 60px; }
.b-cs { width: 44px; }
.g-cells .body { padding-left: 8px; }
.g-cells .big { width: 42px; }
.g-edit .stack { width: 44px; padding-left: 11px; }
.b-sf { width: 44px; }
.b-fs { width: 46px; }
.az { display: flex; align-items: center; height: 30px; margin: 3px 0 4px; }
.az span { display: flex; flex-direction: column; }
.az b { font: 13px/15px "Liberation Sans", sans-serif; }
.az b:first-child { color: #2b88d8; }
.g-an .big { width: 61px; }
.g-an .big > svg:first-child { height: 32px; margin: 2px 0 3px; }
.collapse { margin: auto 7px 3px auto; }

/* Formula bar */
.fbar { display: flex; flex: none; height: 26px; margin: 11px 5px 10px; position: relative; }
.namebox { display: flex; align-items: center; width: 102px; padding: 0 6px; border: 1px solid #c6c6c6; background: #fdfdfd; }
.namebox input, .formula input { flex: 1; min-width: 0; border: 0; padding: 0; background: none; }
.dots { width: 3px; height: 12px; margin: 7px 13px 7px 14px; background: radial-gradient(circle, #aaa 1px, transparent 2px) 0 0 / 3px 4px; flex: none; }
.fx { display: flex; width: 110px; border: 1px solid #c6c6c6; background: #fdfdfd; }
.fx button { flex: 1; }
.fx .fn { font: italic bold 15px/20px "Liberation Serif", serif; color: #666; }
.fn sub { font-size: 11px; vertical-align: 0; }
.formula { display: flex; flex: 1; align-items: center; margin-left: 3px; padding-right: 3px; border: 1px solid #c6c6c6; background: #fdfdfd; }

/* Worksheet */
.sheet { display: flex; flex: 1; min-height: 0; }
.gridwrap { flex: 1; min-width: 0; overflow: hidden; border-right: 1px solid #999; border-bottom: 1px solid #999; }
.grid {
  width: calc(100% + 7px);
  table-layout: fixed;
  border-collapse: separate;
  border-spacing: 0;
  color: #000;
  font: 13px/15px "Liberation Sans", Arial, sans-serif;
}
.ch0 { width: 26px; }
.cA { width: 62px; }
.cB { width: 248px; }
.cC { width: 83px; }
.cD { width: 85px; }
.cF { width: 52px; }
.cG { width: 182px; }
.cH { width: 72px; }
.cI { width: 93px; }
.cJ { width: 75px; }
.grid th { height: 17px; padding: 1px 0 0; font-weight: 400; background: #e6e6e6; border-bottom: 1px solid #c8c8c8; border-right: 1px solid #999; }
.grid thead th { border-bottom-color: #999; border-right-color: #b1b1b1; }
.grid td {
  height: 17px;
  padding: 1px 2px 0;
  background: #fff;
  border-right: 1px solid #d4d4d4;
  border-bottom: 1px solid #d4d4d4;
  text-align: right;
  white-space: nowrap;
}
.grid .corner { background: linear-gradient(135deg, transparent 50%, #b4b4b4 50%) 13px 4px / 9px 9px no-repeat #e6e6e6; }
.grid th.sel { background: #d2d2d2; color: #217346; border-right-color: #217346; }
.grid thead th.sel { border-bottom-color: #217346; border-right-color: #b1b1b1; }
.grid .x { border-color: #000; box-shadow: -1px 0 #000, 0 -1px #000, -1px -1px #000; }
.grid .y { background: #ff0; }
.grid .b { font-weight: 700; }
.grid .u { font-weight: 700; text-decoration: underline; }
.grid .l { text-align: left; }
.grid .m { padding: 1px 0 0; }
.m div { display: flex; justify-content: center; height: 15px; overflow: hidden; text-decoration: underline; }
.active { position: relative; }
.active::before { content: ""; position: absolute; inset: -2px; border: 2px solid #217346; }
.active::after { content: ""; position: absolute; right: -3px; bottom: -3px; width: 6px; height: 6px; background: #217346; border: 1px solid #fff; border-width: 1px 0 0 1px; }
.vscroll { display: flex; flex-direction: column; width: 15px; margin: 2px 3px 0; background: #f0f0f0; }
.vscroll button { height: 15px; border: 1px solid #888; background: #fff; }
.thumb { flex: 0 1 422px; margin-bottom: auto; border: 1px solid #888; background: #fff; }

/* Sheet tabs */
.tabs { display: flex; flex: none; height: 28px; padding-top: 2px; border-bottom: 1px solid #c6c6c6; }
.tabnav { display: flex; align-items: center; gap: 23px; width: 103px; padding-left: 27px; height: 22px; }
.tab { position: relative; height: 22px; margin-right: 5px; font-size: 12px; }
.tab::before { content: ""; position: absolute; left: -3px; top: 1px; width: 1px; height: 20px; background: #999; }
.w1 { width: 54px; }
.w2 { width: 118px; }
.w3 { width: 131px; }
.w4 { width: 139px; }
.w5 { width: 162px; }
.g { background: #9bbb59; color: #000; }
.bl { background: #4f81bd; color: #fff; font-size: 13px; }
.last { width: 129px; }
.last, .cur { margin-right: 2px; }
.cur { width: 64px; height: 25px; margin-top: -3px; padding-top: 5px; background: linear-gradient(#fff 10%, #f6c7a3) center 3px / 58px 18px no-repeat #fff; border-bottom: 2px solid #217346; color: #217346; font-weight: 700; }
.cur::before, .first::before { display: none; }
.cut { width: 3px; }
.more { margin-left: 4px; color: #0a6332; font-weight: 700; height: 22px; font-size: 14px; }
.tabsright { display: flex; align-items: center; height: 22px; margin: 0 21px 0 auto; }
.tabsright .dots { margin: 0 15px 0 19px; }
.hscroll { display: flex; width: 46px; height: 15px; }
.hscroll > * { flex: 1; border: 1px solid #999; background: #fff; }

/* Status bar */
.status { display: flex; align-items: center; flex: none; height: 21px; padding-left: 7px; background: #f3f2f1; font-size: 11px; }
.acc { gap: 4px; margin-left: 20px; }
.views { display: flex; align-items: center; margin: 0 7px 0 auto; height: 21px; }
.views button { width: 40px; height: 21px; }
.views .on { background: #cfcdcb; }
.views .z { width: 10px; margin: 0 0 0 6px; }
.views input { appearance: none; width: 100px; height: 12px; margin: 0 0 0 3px; background: linear-gradient(#444, #444) center / 100% 1px no-repeat; }
.views input::-webkit-slider-thumb { appearance: none; width: 5px; height: 11px; background: #333; }
.pc { margin-left: 11px; }

/* Taskbar */
.taskbar { display: flex; flex: none; height: 40px; background: linear-gradient(90deg, #404244, #38393a 50%, #2b2c2f 75%, #38393a); color: #fff; }
.start { width: 49px; }
.search { display: flex; align-items: center; gap: 11px; width: 287px; padding-left: 10px; background: #2f2f2f; border: 1px solid #555; font-size: 14px; }
.search input { flex: 1; min-width: 0; border: 0; background: none; padding: 0; }
.search input::placeholder { color: #ddd; opacity: 1; }
.tv { width: 48px; margin-right: 3px; }
.app { position: relative; width: 49px; }
.run { background: linear-gradient(#b0b0b0, #b0b0b0) 4px 100% / 41px 2px no-repeat; }
.act { background: linear-gradient(#b0b0b0, #b0b0b0) 0 100% / 100% 2px no-repeat #58595b; width: 48px; }
.badge {
  position: absolute;
  left: 26px;
  top: 18px;
  width: 21px;
  height: 18px;
  border: 1px solid #999;
  border-radius: 9px;
  background: #333;
  font-size: 11px;
  font-weight: 700;
  line-height: 16px;
}
.jb { width: 16px; height: 16px; border: 0; background: #1295a8; font-weight: 400; }
.tray { display: flex; align-items: center; gap: 10px; margin-left: auto; padding-right: 5px; }
.weather { gap: 9px; margin-right: 16px; font-size: 13px; }
.lang { width: 22px; font-size: 11px; }
.clock { width: 60px; font-size: 11px; line-height: 18px; text-align: center; }
.notif { width: 21px; height: 40px; margin-right: 18px; }
```
